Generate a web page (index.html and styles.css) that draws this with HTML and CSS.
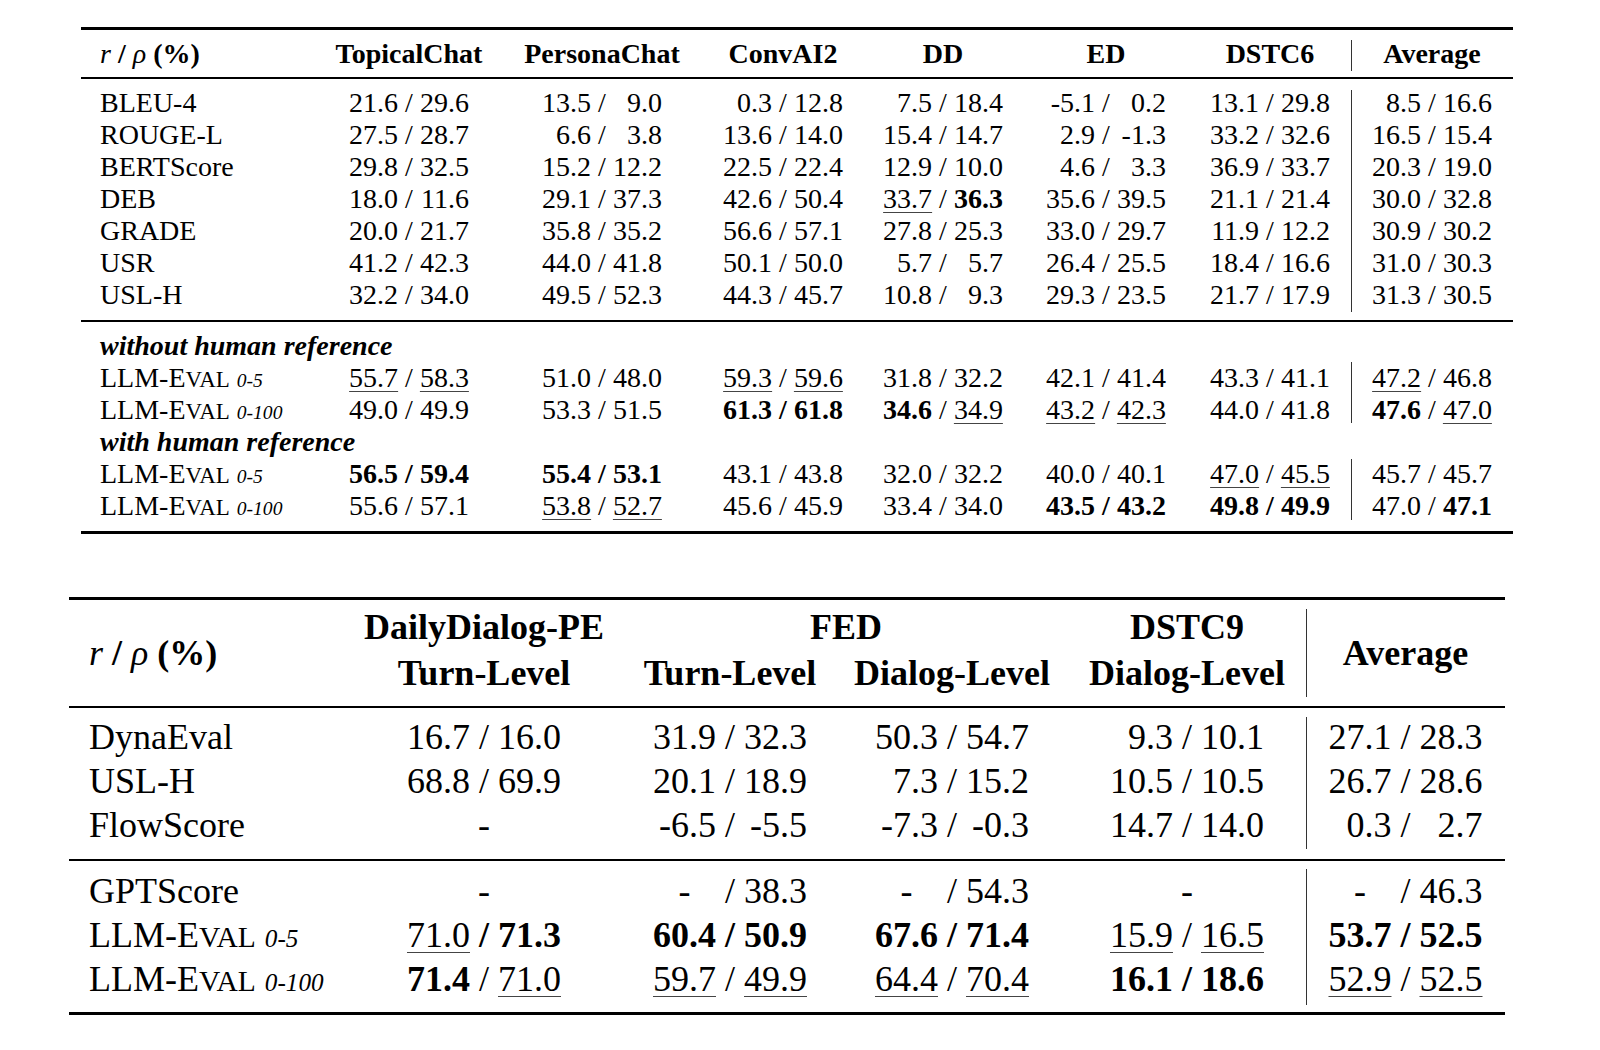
FILE: index.html
```html
<!DOCTYPE html>
<html>
<head>
<meta charset="utf-8">
<link rel="stylesheet" href="styles.css">
</head>
<body>
<table class="t1">
<colgroup>
<col class="c236"><col class="c184"><col class="c202"><col class="c160"><col class="c160"><col class="c166"><col class="c162"><col class="c162">
</colgroup>
<thead>
<tr class="hd">
<td class="lab"><i>r</i> / <i>ρ</i> (%)</td><td>TopicalChat</td><td>PersonaChat</td><td>ConvAI2</td><td>DD</td><td>ED</td><td>DSTC6</td><td class="avg">Average</td>
</tr>
</thead>
<tbody class="g1">
<tr class="first"><td class="lab">BLEU-4</td><td><span class="v">21.6</span> / <span class="v">29.6</span></td><td><span class="v">13.5</span> / <span class="v">9.0</span></td><td><span class="v">0.3</span> / <span class="v">12.8</span></td><td><span class="v">7.5</span> / <span class="v">18.4</span></td><td><span class="v">-5.1</span> / <span class="v">0.2</span></td><td><span class="v">13.1</span> / <span class="v">29.8</span></td><td class="avg"><span class="v">8.5</span> / <span class="v">16.6</span></td></tr>
<tr><td class="lab">ROUGE-L</td><td><span class="v">27.5</span> / <span class="v">28.7</span></td><td><span class="v">6.6</span> / <span class="v">3.8</span></td><td><span class="v">13.6</span> / <span class="v">14.0</span></td><td><span class="v">15.4</span> / <span class="v">14.7</span></td><td><span class="v">2.9</span> / <span class="v">-1.3</span></td><td><span class="v">33.2</span> / <span class="v">32.6</span></td><td class="avg"><span class="v">16.5</span> / <span class="v">15.4</span></td></tr>
<tr><td class="lab">BERTScore</td><td><span class="v">29.8</span> / <span class="v">32.5</span></td><td><span class="v">15.2</span> / <span class="v">12.2</span></td><td><span class="v">22.5</span> / <span class="v">22.4</span></td><td><span class="v">12.9</span> / <span class="v">10.0</span></td><td><span class="v">4.6</span> / <span class="v">3.3</span></td><td><span class="v">36.9</span> / <span class="v">33.7</span></td><td class="avg"><span class="v">20.3</span> / <span class="v">19.0</span></td></tr>
<tr><td class="lab">DEB</td><td><span class="v">18.0</span> / <span class="v">11.6</span></td><td><span class="v">29.1</span> / <span class="v">37.3</span></td><td><span class="v">42.6</span> / <span class="v">50.4</span></td><td><span class="v u">33.7</span> / <span class="v b">36.3</span></td><td><span class="v">35.6</span> / <span class="v">39.5</span></td><td><span class="v">21.1</span> / <span class="v">21.4</span></td><td class="avg"><span class="v">30.0</span> / <span class="v">32.8</span></td></tr>
<tr><td class="lab">GRADE</td><td><span class="v">20.0</span> / <span class="v">21.7</span></td><td><span class="v">35.8</span> / <span class="v">35.2</span></td><td><span class="v">56.6</span> / <span class="v">57.1</span></td><td><span class="v">27.8</span> / <span class="v">25.3</span></td><td><span class="v">33.0</span> / <span class="v">29.7</span></td><td><span class="v">11.9</span> / <span class="v">12.2</span></td><td class="avg"><span class="v">30.9</span> / <span class="v">30.2</span></td></tr>
<tr><td class="lab">USR</td><td><span class="v">41.2</span> / <span class="v">42.3</span></td><td><span class="v">44.0</span> / <span class="v">41.8</span></td><td><span class="v">50.1</span> / <span class="v">50.0</span></td><td><span class="v">5.7</span> / <span class="v">5.7</span></td><td><span class="v">26.4</span> / <span class="v">25.5</span></td><td><span class="v">18.4</span> / <span class="v">16.6</span></td><td class="avg"><span class="v">31.0</span> / <span class="v">30.3</span></td></tr>
<tr class="last"><td class="lab">USL-H</td><td><span class="v">32.2</span> / <span class="v">34.0</span></td><td><span class="v">49.5</span> / <span class="v">52.3</span></td><td><span class="v">44.3</span> / <span class="v">45.7</span></td><td><span class="v">10.8</span> / <span class="v">9.3</span></td><td><span class="v">29.3</span> / <span class="v">23.5</span></td><td><span class="v">21.7</span> / <span class="v">17.9</span></td><td class="avg"><span class="v">31.3</span> / <span class="v">30.5</span></td></tr>
</tbody>
<tbody class="g2">
<tr class="first"><td class="sec" colspan="8">without human reference</td></tr>
<tr><td class="lab">LLM-E<span class="sc">VAL</span> <i class="rng">0-5</i></td><td><span class="v u">55.7</span> / <span class="v u">58.3</span></td><td><span class="v">51.0</span> / <span class="v">48.0</span></td><td><span class="v u">59.3</span> / <span class="v u">59.6</span></td><td><span class="v">31.8</span> / <span class="v">32.2</span></td><td><span class="v">42.1</span> / <span class="v">41.4</span></td><td><span class="v">43.3</span> / <span class="v">41.1</span></td><td class="avg"><span class="v u">47.2</span> / <span class="v">46.8</span></td></tr>
<tr class="cut"><td class="lab">LLM-E<span class="sc">VAL</span> <i class="rng">0-100</i></td><td><span class="v">49.0</span> / <span class="v">49.9</span></td><td><span class="v">53.3</span> / <span class="v">51.5</span></td><td class="b"><span class="v">61.3</span> / <span class="v">61.8</span></td><td><span class="v b">34.6</span> / <span class="v u">34.9</span></td><td><span class="v u">43.2</span> / <span class="v u">42.3</span></td><td><span class="v">44.0</span> / <span class="v">41.8</span></td><td class="avg"><span class="v b">47.6</span> / <span class="v u">47.0</span></td></tr>
<tr><td class="sec" colspan="8">with human reference</td></tr>
<tr class="tin"><td class="lab">LLM-E<span class="sc">VAL</span> <i class="rng">0-5</i></td><td class="b"><span class="v">56.5</span> / <span class="v">59.4</span></td><td class="b"><span class="v">55.4</span> / <span class="v">53.1</span></td><td><span class="v">43.1</span> / <span class="v">43.8</span></td><td><span class="v">32.0</span> / <span class="v">32.2</span></td><td><span class="v">40.0</span> / <span class="v">40.1</span></td><td><span class="v u">47.0</span> / <span class="v u">45.5</span></td><td class="avg"><span class="v">45.7</span> / <span class="v">45.7</span></td></tr>
<tr class="end"><td class="lab">LLM-E<span class="sc">VAL</span> <i class="rng">0-100</i></td><td><span class="v">55.6</span> / <span class="v">57.1</span></td><td><span class="v u">53.8</span> / <span class="v u">52.7</span></td><td><span class="v">45.6</span> / <span class="v">45.9</span></td><td><span class="v">33.4</span> / <span class="v">34.0</span></td><td class="b"><span class="v">43.5</span> / <span class="v">43.2</span></td><td class="b"><span class="v">49.8</span> / <span class="v">49.9</span></td><td class="avg"><span class="v">47.0</span> / <span class="v b">47.1</span></td></tr>
</tbody>
</table>

<table class="t2">
<colgroup>
<col class="c275"><col class="c280"><col class="c212"><col class="c232"><col class="c238"><col class="c199">
</colgroup>
<thead>
<tr class="hd h1">
<td class="lab span" rowspan="2"><i>r</i> / <i>ρ</i> (%)</td><td>DailyDialog-PE</td><td colspan="2">FED</td><td>DSTC9</td><td class="avg span" rowspan="2">Average</td>
</tr>
<tr class="hd h2">
<td>Turn-Level</td><td>Turn-Level</td><td>Dialog-Level</td><td>Dialog-Level</td>
</tr>
</thead>
<tbody class="g1">
<tr class="first"><td class="lab">DynaEval</td><td><span class="v">16.7</span> / <span class="v">16.0</span></td><td><span class="v">31.9</span> / <span class="v">32.3</span></td><td><span class="v">50.3</span> / <span class="v">54.7</span></td><td><span class="v">9.3</span> / <span class="v">10.1</span></td><td class="avg"><span class="v">27.1</span> / <span class="v">28.3</span></td></tr>
<tr><td class="lab">USL-H</td><td><span class="v">68.8</span> / <span class="v">69.9</span></td><td><span class="v">20.1</span> / <span class="v">18.9</span></td><td><span class="v">7.3</span> / <span class="v">15.2</span></td><td><span class="v">10.5</span> / <span class="v">10.5</span></td><td class="avg"><span class="v">26.7</span> / <span class="v">28.6</span></td></tr>
<tr class="last"><td class="lab">FlowScore</td><td>-</td><td><span class="v">-6.5</span> / <span class="v">-5.5</span></td><td><span class="v">-7.3</span> / <span class="v">-0.3</span></td><td><span class="v">14.7</span> / <span class="v">14.0</span></td><td class="avg"><span class="v">0.3</span> / <span class="v">2.7</span></td></tr>
</tbody>
<tbody class="g2">
<tr class="first"><td class="lab">GPTScore</td><td>-</td><td><span class="v c">-</span> / <span class="v">38.3</span></td><td><span class="v c">-</span> / <span class="v">54.3</span></td><td>-</td><td class="avg"><span class="v c">-</span> / <span class="v">46.3</span></td></tr>
<tr><td class="lab">LLM-E<span class="sc">VAL</span> <i class="rng">0-5</i></td><td><span class="v u">71.0</span> <b>/</b> <span class="v b">71.3</span></td><td class="b"><span class="v">60.4</span> / <span class="v">50.9</span></td><td class="b"><span class="v">67.6</span> / <span class="v">71.4</span></td><td><span class="v u">15.9</span> / <span class="v u">16.5</span></td><td class="avg b"><span class="v">53.7</span> / <span class="v">52.5</span></td></tr>
<tr class="end"><td class="lab">LLM-E<span class="sc">VAL</span> <i class="rng">0-100</i></td><td><span class="v b">71.4</span> / <span class="v u">71.0</span></td><td><span class="v u">59.7</span> / <span class="v u">49.9</span></td><td><span class="v u">64.4</span> / <span class="v u">70.4</span></td><td class="b"><span class="v">16.1</span> / <span class="v">18.6</span></td><td class="avg"><span class="v u">52.9</span> / <span class="v u">52.5</span></td></tr>
</tbody>
</table>
</body>
</html>
```

FILE: styles.css
```css
html, body {
  margin: 0;
  background: #fff;
}
body {
  padding-top: 27px;
  color: #000;
  font-family: "Liberation Serif", "Times New Roman", serif;
}
table {
  border-collapse: separate;
  border-spacing: 0;
  table-layout: fixed;
}
td {
  padding: 0;
  text-align: center;
  vertical-align: middle;
  white-space: nowrap;
}
.v {
  display: inline-block;
  width: 1.75em;
  text-align: right;
}
.v.c { text-align: center; }
.b { font-weight: bold; }
.u {
  text-decoration: underline;
  text-decoration-thickness: 1px;
  text-decoration-color: #444;
  text-underline-offset: 4px;
}
.hd td { font-weight: bold; }
.hd i { font-weight: normal; }
.sc { font-size: 0.82em; line-height: 0; }
.rng { font-size: 0.7em; line-height: 0; }
.sec {
  text-align: left;
  font-weight: bold;
  font-style: italic;
}
.avg { position: relative; }
.avg::before {
  content: "";
  position: absolute;
  left: 0;
  top: 0;
  bottom: 0;
  border-left: 1px solid #333;
}

/* ---------- table 1 ---------- */
.t1 {
  margin-left: 81px;
  width: 1432px;
  font-size: 28px;
}
.c236 { width: 236px; }
.c184 { width: 184px; }
.c202 { width: 202px; }
.c160 { width: 160px; }
.c166 { width: 166px; }
.c162 { width: 162px; }
.t1 td { line-height: 32px; }
.t1 td.lab, .t1 td.sec { padding-left: 19px; text-align: left; }
.t1 .hd td {
  line-height: 47px;
  border-top: 3px solid #000;
  border-bottom: 2px solid #000;
}
.t1 .hd .avg::before { top: 10px; bottom: 6px; }
.t1 .first td { padding-top: 8px; }
.t1 .last td { padding-bottom: 9px; border-bottom: 2px solid #000; }
.t1 .end td { padding-bottom: 9px; border-bottom: 3px solid #000; }
.t1 .first .avg::before { top: 11px; }
.t1 .last .avg::before { bottom: 8px; }
.t1 .cut .avg::before { bottom: 3px; }
.t1 .tin .avg::before { top: 1px; }
.t1 .end .avg::before { bottom: 11px; }

/* ---------- table 2 ---------- */
.t2 {
  margin: 63px 0 0 69px;
  width: 1436px;
  font-size: 36px;
}
.c275 { width: 275px; }
.c280 { width: 280px; }
.c212 { width: 212px; }
.c232 { width: 232px; }
.c238 { width: 238px; }
.c199 { width: 199px; }
.t2 td { line-height: 44px; }
.t2 td.lab { padding-left: 20px; text-align: left; }
.t2 .u { text-underline-offset: 5px; }
.t2 .hd td { line-height: 46px; }
.t2 .h1 td { border-top: 3px solid #000; padding-top: 4px; }
.t2 .h2 td { border-bottom: 2px solid #000; padding-bottom: 10px; }
.t2 .hd td.span {
  border-top: 3px solid #000;
  border-bottom: 2px solid #000;
  padding-top: 0;
  padding-bottom: 0;
}
.t2 .hd .avg::before { top: 9px; bottom: 9px; }
.t2 .g1 .first td { padding-top: 7px; }
.t2 .g1 .last td { padding-bottom: 12px; border-bottom: 2px solid #000; }
.t2 .g1 .first .avg::before { top: 9px; }
.t2 .g1 .last .avg::before { bottom: 10px; }
.t2 .g2 .first td { padding-top: 8px; }
.t2 .g2 .end td { padding-bottom: 11px; border-bottom: 3px solid #000; }
.t2 .g2 .first .avg::before { top: 8px; }
.t2 .g2 .end .avg::before { bottom: 7px; }
```
